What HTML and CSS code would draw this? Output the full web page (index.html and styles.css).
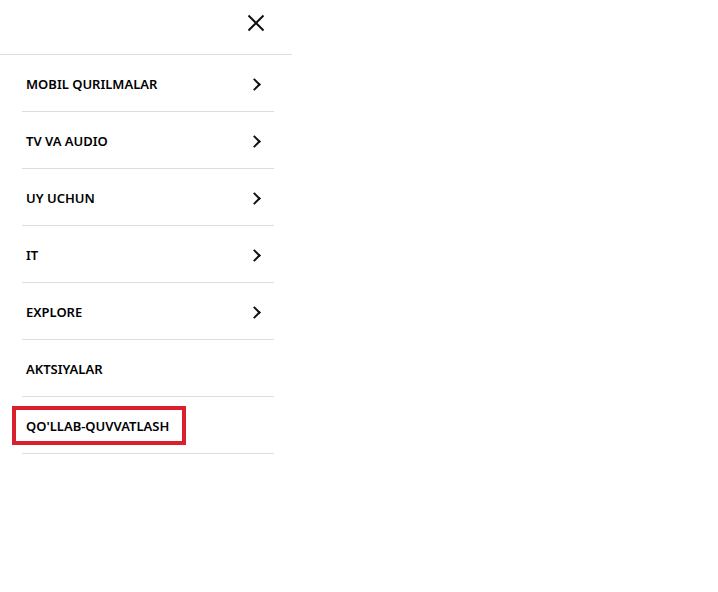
FILE: index.html
```html
<!DOCTYPE html>
<html lang="uz">
<head>
    <meta charset="UTF-8">
    <meta name="viewport" content="width=device-width, initial-scale=1.0">
    <title>Menyu</title>
    <link rel="stylesheet" href="styles.css">
</head>
<body>
    <nav class="menu">
        <div class="menu-head">
            <button class="close-btn" aria-label="Yopish">
                <svg width="18" height="18" viewBox="0 0 18 18">
                    <path d="M1.5 1.5 L16.5 16.5 M16.5 1.5 L1.5 16.5" stroke="#111" stroke-width="2" fill="none"/>
                </svg>
            </button>
        </div>
        <ul class="menu-list">
            <li class="menu-item"><a href="#">MOBIL QURILMALAR</a><span class="chev"></span></li>
            <li class="menu-item"><a href="#">TV VA AUDIO</a><span class="chev"></span></li>
            <li class="menu-item"><a href="#">UY UCHUN</a><span class="chev"></span></li>
            <li class="menu-item"><a href="#">IT</a><span class="chev"></span></li>
            <li class="menu-item"><a href="#">EXPLORE</a><span class="chev"></span></li>
            <li class="menu-item"><a href="#">AKTSIYALAR</a></li>
            <li class="menu-item"><a href="#" class="marked">QO'LLAB-QUVVATLASH</a></li>
        </ul>
    </nav>
</body>
</html>
```

FILE: styles.css
```css
body {
    margin: 0;
    background-color: white;
    font-family: "Noto Sans", Arial, sans-serif;
    color: #000;
}
.menu {
    width: 292px;
}
.menu-head {
    height: 55px;
    border-bottom: 1px solid #ddd;
    display: flex;
    justify-content: flex-end;
    align-items: center;
    padding-right: 27px;
    box-sizing: border-box;
}
.close-btn {
    background: none;
    border: none;
    padding: 0;
    width: 18px;
    height: 18px;
    margin-top: -8px;
    cursor: pointer;
}
.menu-list {
    list-style: none;
    margin: 0 18px 0 22px;
    padding: 0;
}
.menu-item {
    height: 54px;
    border-bottom: 1px solid #ddd;
    display: flex;
    align-items: center;
    justify-content: space-between;
    padding: 2px 14px 0 4px;
}
.menu-item a {
    color: #000;
    text-decoration: none;
    font-size: 13px;
    font-weight: 600;
    line-height: 16px;
}
.menu-item a.marked {
    padding: 1px 6px 0 3px;
    margin-left: -3px;
    margin-top: -2px;
    outline: 4px solid #d9202e;
    outline-offset: 7px;
}
.chev {
    width: 7px;
    height: 7px;
    border-top: 2px solid #111;
    border-right: 2px solid #111;
    transform: rotate(45deg);
    margin-right: 1px;
}
```
